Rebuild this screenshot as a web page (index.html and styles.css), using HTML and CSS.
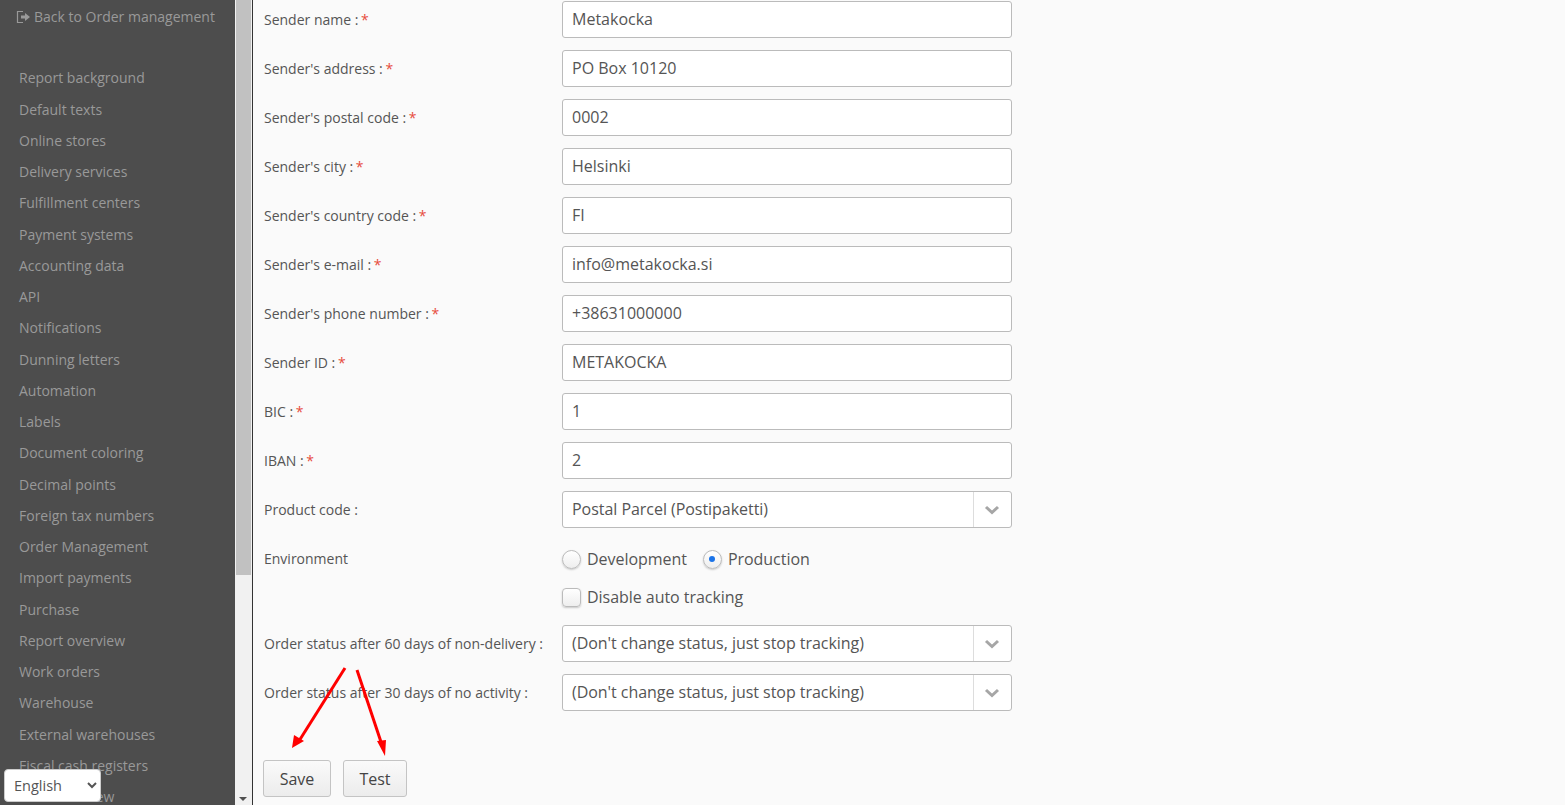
FILE: index.html
```html
<!DOCTYPE html>
<html lang="en">
<head>
<meta charset="utf-8">
<title>Settings</title>
<link rel="stylesheet" href="styles.css">
</head>
<body>
<div class="app">
  <aside class="sidebar">
    <a class="back"><svg class="back-icon" width="15" height="14" viewBox="0 0 15 14"><path d="M7 1.500H1.500v11H7" fill="none" stroke="#999" stroke-width="1.2"/><path d="M5 5.500h4V3l5 4-5 4V8.500H5z" fill="#999"/></svg>Back to Order management</a>
    <nav class="menu">
      <a>Report background</a><a>Default texts</a><a>Online stores</a><a>Delivery services</a><a>Fulfillment centers</a><a>Payment systems</a><a>Accounting data</a><a>API</a><a>Notifications</a><a>Dunning letters</a><a>Automation</a><a>Labels</a><a>Document coloring</a><a>Decimal points</a><a>Foreign tax numbers</a><a>Order Management</a><a>Import payments</a><a>Purchase</a><a>Report overview</a><a>Work orders</a><a>Warehouse</a><a>External warehouses</a><a>Fiscal cash registers</a><a>Sales overview</a>
    </nav>
  </aside>
  <div class="scrollbar"><div class="thumb"></div><div class="track"></div><div class="arrow"></div></div>
  <main class="main">
    <form class="form">
      <div class="row"><label class="lab">Sender name : <b>*</b></label><div class="field">Metakocka</div></div>
      <div class="row"><label class="lab">Sender's address : <b>*</b></label><div class="field">PO Box 10120</div></div>
      <div class="row"><label class="lab">Sender's postal code : <b>*</b></label><div class="field">0002</div></div>
      <div class="row"><label class="lab">Sender's city : <b>*</b></label><div class="field">Helsinki</div></div>
      <div class="row"><label class="lab">Sender's country code : <b>*</b></label><div class="field">FI</div></div>
      <div class="row"><label class="lab">Sender's e-mail : <b>*</b></label><div class="field">info@metakocka.si</div></div>
      <div class="row"><label class="lab">Sender's phone number : <b>*</b></label><div class="field">+38631000000</div></div>
      <div class="row"><label class="lab">Sender ID : <b>*</b></label><div class="field">METAKOCKA</div></div>
      <div class="row"><label class="lab">BIC : <b>*</b></label><div class="field">1</div></div>
      <div class="row"><label class="lab">IBAN : <b>*</b></label><div class="field">2</div></div>
      <div class="row"><label class="lab">Product code :</label><div class="field select"><span class="value">Postal Parcel (Postipaketti)</span><span class="caret"><svg width="16" height="10" viewBox="0 0 16 10"><path d="M2 2l6 5.500L14 2" fill="none" stroke="#a6a6a6" stroke-width="3"/></svg></span></div></div>
      <div class="row row-radio"><label class="lab">Environment</label><div class="options"><span class="radio"></span><span class="opt">Development</span><span class="radio on"></span><span class="opt">Production</span></div></div>
      <div class="row row-check"><span class="lab"></span><div class="options"><span class="check"></span><span class="opt">Disable auto tracking</span></div></div>
      <div class="row"><label class="lab">Order status after 60 days of non-delivery :</label><div class="field select"><span class="value">(Don't change status, just stop tracking)</span><span class="caret"><svg width="16" height="10" viewBox="0 0 16 10"><path d="M2 2l6 5.500L14 2" fill="none" stroke="#a6a6a6" stroke-width="3"/></svg></span></div></div>
      <div class="row"><label class="lab">Order status after 30 days of no activity :</label><div class="field select"><span class="value">(Don't change status, just stop tracking)</span><span class="caret"><svg width="16" height="10" viewBox="0 0 16 10"><path d="M2 2l6 5.500L14 2" fill="none" stroke="#a6a6a6" stroke-width="3"/></svg></span></div></div>
      <div class="actions"><button type="button" class="btn btn-save">Save</button><button type="button" class="btn btn-test">Test</button></div>
    </form>
  </main>
  <select class="lang"><option>English</option></select>
  <svg class="arrows" width="110" height="95" viewBox="0 0 110 95">
    <path d="M54 1L8 74" stroke="#f00" stroke-width="3" fill="none"/>
    <path d="M1 81l2-13 10 6z" fill="#f00"/>
    <path d="M66 3l24 72" stroke="#f00" stroke-width="3" fill="none"/>
    <path d="M94 89l-8-15 9-1z" fill="#f00"/>
  </svg>
</div>
</body>
</html>
```
FILE: styles.css
```css
* { box-sizing: border-box; }
html, body { margin: 0; height: 100%; overflow: hidden; }
body { font-family: "Open Sans", sans-serif; color: #555; background: #fafafa; }
.app { position: relative; display: flex; height: 805px; width: 1565px; overflow: hidden; }
.sidebar { width: 235px; flex: none; height: 805px; background: #4d4d4d; color: #999; overflow: hidden; font-size: 14px; }
.back { display: flex; align-items: center; height: 33px; padding-left: 16px; gap: 3px; white-space: nowrap; }
.back-icon { flex: none; }
.menu { display: flex; flex-direction: column; padding: 29.300px 0 0 19px; }
.menu a { display: block; height: 31.250px; line-height: 31.250px; white-space: nowrap; }
.scrollbar { position: relative; flex: none; width: 18px; height: 805px; display: flex; flex-direction: column; border-right: 1px solid #333; background: #f1f1f1; }
.thumb { height: 575px; width: 15px; margin-left: 1px; background: #c1c1c1; }
.track { flex: 1; }
.arrow { position: absolute; left: 4px; bottom: 4px; border: 4px solid transparent; border-top: 4px solid #505050; border-bottom: 0; }
.main { flex: 1; background: #fafafa; padding: 1px 0 0 11px; font-size: 14px; }
.form { display: flex; flex-direction: column; width: 748px; }
.row { display: flex; align-items: center; height: 37px; margin-bottom: 12px; }
.lab { width: 298px; flex: none; color: #555; white-space: nowrap; font-size: 14px; }
.lab b { color: #e74c3c; font-weight: 400; margin-left: -1px; }
.field { flex: 1; height: 37px; border: 1px solid #bbb; border-radius: 3px; background: #fff; font-size: 16px; line-height: 35px; padding-left: 9px; color: #555; }
.select { display: flex; padding-left: 0; }
.value { flex: 1; padding-left: 9px; letter-spacing: -.04px; }
.caret { width: 38px; flex: none; border-left: 1px solid #ddd; display: flex; align-items: center; justify-content: center; padding-right: 1px; }
.row-radio { height: 38px; margin-bottom: 0; }
.row-radio .lab { margin-bottom: 2px; }
.row-check { height: 38px; margin-bottom: 9px; }
.options { display: flex; align-items: center; color: #555; font-size: 16px; }
.opt { margin-right: 16px; letter-spacing: -.04px; }
.radio, .check { width: 19px; height: 19px; margin-right: 6px; flex: none; border: 1px solid #bbb; background: linear-gradient(#fff, #eee); box-shadow: 0 1px 2px rgba(0,0,0,.2); }
.radio { border-radius: 50%; position: relative; }
.radio.on::after { content: ""; position: absolute; left: 5.500px; top: 5.500px; width: 6px; height: 6px; border-radius: 50%; background: #1a73e8; }
.check { border-radius: 4px; }
.actions { display: flex; gap: 12px; margin: 37px 0 0 -1px; }
.btn { height: 37px; font: 16px "Open Sans", sans-serif; color: #444; border: 1px solid #c4c4c4; border-radius: 3px; background: linear-gradient(#fafafa, #ececec); padding: 0; }
.btn-save { width: 68px; }
.btn-test { width: 64px; }
.lang { position: absolute; left: 4px; top: 769px; width: 97px; height: 33px; font: 14.500px "Open Sans", sans-serif; color: #555; background: #fff; border: 1px solid #ccc; border-radius: 4px; padding-left: 5px; }
.arrows { position: absolute; left: 291px; top: 667px; pointer-events: none; }
```
